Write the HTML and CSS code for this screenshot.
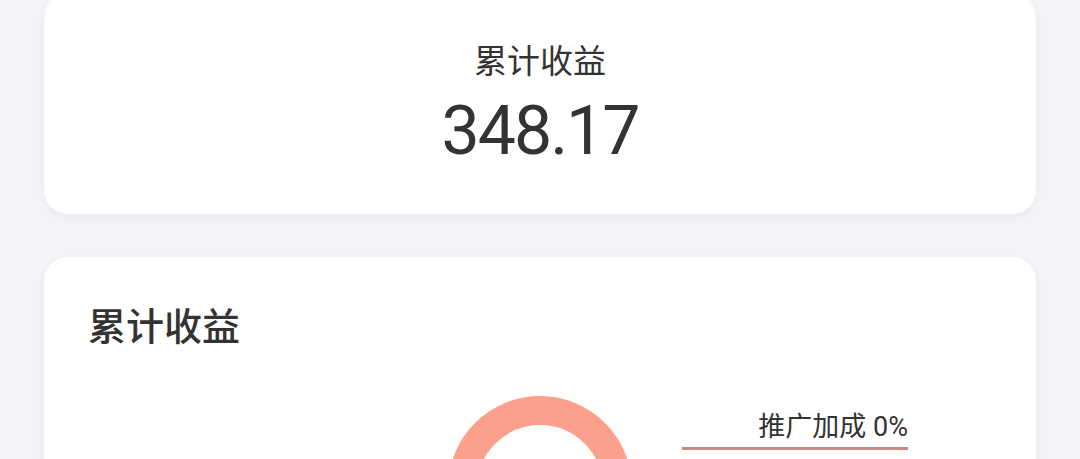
FILE: index.html
```html
<!DOCTYPE html>
<html lang="zh-CN">
<head>
<meta charset="utf-8">
<link rel="stylesheet" href="styles.css">
</head>
<body>
<div class="page">
  <section class="card summary">
    <div class="summary-label">累计收益</div>
    <div class="summary-value">348.17</div>
  </section>
  <section class="card chart-card">
    <h2 class="chart-title">累计收益</h2>
    <div class="chart">
      <div class="chart-left"></div>
      <svg class="donut" width="184" height="184" viewBox="0 0 184 184">
        <circle cx="92" cy="92" r="77.5" fill="none" stroke="#fba08d" stroke-width="29"/>
      </svg>
      <div class="legend">
        <div class="legend-text">推广加成 0%</div>
        <div class="legend-line"></div>
      </div>
    </div>
  </section>
</div>
</body>
</html>
```
FILE: styles.css
```css
html, body {
  margin: 0;
  padding: 0;
  background: #f3f4f7;
}
body {
  font-family: Roboto, "Noto Sans CJK SC", sans-serif;
  color: #333333;
  overflow: hidden;
}
.page {
  padding: 0 44px;
  margin-top: -6px;
  display: flex;
  flex-direction: column;
  gap: 43px;
}
.card {
  background: #ffffff;
  border-radius: 24px;
  box-shadow: 0 3px 10px rgba(30, 40, 60, 0.05);
}
.summary {
  height: 220px;
  box-sizing: border-box;
  padding-top: 48px;
  display: flex;
  flex-direction: column;
  align-items: center;
}
.summary-label {
  font-size: 33px;
  line-height: 40px;
  color: #333;
}
.summary-value {
  margin-top: 15px;
  font-size: 68px;
  line-height: 1;
  letter-spacing: -2px;
  font-weight: 400;
  color: #333;
}
.chart-card {
  height: 260px;
  padding: 47px 44px 0;
}
.chart-title {
  margin: 0;
  font-size: 38px;
  line-height: 46px;
  font-weight: 500;
  color: #333;
}
.chart {
  margin-top: 46px;
  display: grid;
  grid-template-columns: 1fr 184px 1fr;
  margin-left: -44px;
  margin-right: -44px;
}
.donut {
  display: block;
}
.legend {
  margin-left: 50px;
  width: 226px;
  padding-top: 15px;
}
.legend-text {
  font-size: 27px;
  line-height: 32px;
  text-align: right;
  color: #333;
}
.legend-line {
  margin-top: 4px;
  height: 3px;
  background: #c88a80;
}
```
